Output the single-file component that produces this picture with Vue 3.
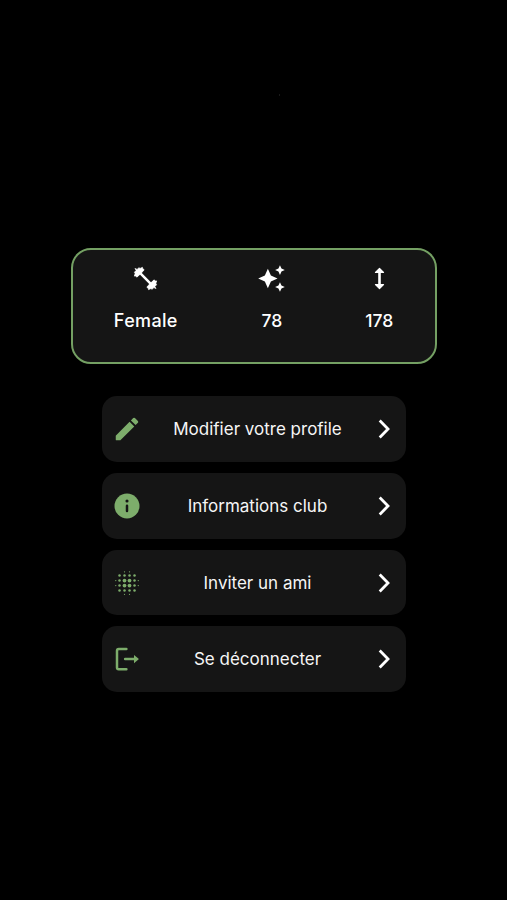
<script setup>
import { ref } from 'vue'

const stats = ref([
  { icon: 'dumbbell', value: 'Female' },
  { icon: 'sparkles', value: '78' },
  { icon: 'height', value: '178' }
])

const menu = ref([
  { icon: 'edit', label: 'Modifier votre profile' },
  { icon: 'info', label: 'Informations club' },
  { icon: 'blur', label: 'Inviter un ami' },
  { icon: 'logout', label: 'Se déconnecter' }
])

// [x, y, radius]
const dots = [
  [10, 3, 0.5], [14, 3, 0.5],
  [6, 6, 1], [10, 6, 1], [14, 6, 1], [18, 6, 1],
  [3, 10, 0.5], [6, 10, 1], [10, 10, 1.5], [14, 10, 1.5], [18, 10, 1], [21, 10, 0.5],
  [3, 14, 0.5], [6, 14, 1], [10, 14, 1.5], [14, 14, 1.5], [18, 14, 1], [21, 14, 0.5],
  [6, 18, 1], [10, 18, 1], [14, 18, 1], [18, 18, 1],
  [10, 21, 0.5], [14, 21, 0.5]
]
</script>

<template>
  <main class="profile">
    <i class="speck"></i>

    <section class="stats">
      <div v-for="stat in stats" :key="stat.icon" class="stat" :class="stat.icon">
        <svg v-if="stat.icon === 'dumbbell'" class="stat-icon" viewBox="0 0 30 30">
          <g fill="currentColor" stroke="currentColor" stroke-linejoin="round" stroke-linecap="round">
            <path d="M9 9 21 21" stroke-width="2.600" />
            <path d="M4.500 4.800 6.300 5.600 8.300 3.800 9.300 4.700 11.800 3.500 12.300 5.200 13.600 6 11 9 9 11 6 13.600 5.200 12.300 3.500 12.500 4.300 10 3.600 8.500 5.200 6.800Z" stroke-width="0.800" />
            <path d="M25.500 25.200 23.700 24.400 21.700 26.200 20.700 25.300 18.200 26.500 17.700 24.800 16.400 24 19 21 21 19 24 16.400 24.800 17.700 26.500 17.500 25.700 20 26.400 21.500 24.800 23.200Z" stroke-width="0.800" />
          </g>
        </svg>
        <svg v-else-if="stat.icon === 'sparkles'" class="stat-icon" viewBox="0 0 24 24">
          <path fill="currentColor" d="m19 9 1.25-2.75L23 5l-2.75-1.25L19 1l-1.25 2.75L15 5l2.75 1.25L19 9zm-7.5.5L9 4 6.500 9.500 1 12l5.500 2.500L9 20l2.500-5.500L17 12l-5.500-2.500zM19 15l-1.250 2.750L15 19l2.750 1.250L19 23l1.250-2.750L23 19l-2.750-1.250L19 15z" />
        </svg>
        <svg v-else class="stat-icon" viewBox="0 0 30 30">
          <path d="M15 4.500 19.200 8.700H10.800ZM15 25.500 19.200 21.300H10.800Z" fill="currentColor" stroke="currentColor" stroke-width="1.200" stroke-linejoin="round" />
          <path d="M15 8v14" stroke="currentColor" stroke-width="2.700" />
        </svg>
        <span class="stat-value">{{ stat.value }}</span>
      </div>
    </section>

    <nav class="menu">
      <button v-for="item in menu" :key="item.icon" type="button" class="menu-item">
        <svg class="menu-icon" viewBox="0 0 24 24">
          <path v-if="item.icon === 'edit'" fill="currentColor" d="M3 17.460v3.040c0 .280.220.500.500.500h3.040c.130 0 .260-.050.350-.150L17.810 9.940l-3.750-3.750L3.150 17.100c-.100.100-.150.220-.150.360zM20.710 7.040a1 1 0 0 0 0-1.410l-2.340-2.340a1 1 0 0 0-1.410 0l-1.830 1.830 3.750 3.750 1.830-1.830z" />
          <g v-else-if="item.icon === 'info'">
            <circle cx="12" cy="12" r="10" fill="currentColor" />
            <circle cx="12" cy="8" r="1.250" fill="#151515" />
            <path d="M12 11.700v4.300" stroke="#151515" stroke-width="2" stroke-linecap="round" />
          </g>
          <g v-else-if="item.icon === 'blur'" fill="currentColor">
            <circle v-for="dot in dots" :key="dot.join()" :cx="dot[0]" :cy="dot[1]" :r="dot[2]" />
          </g>
          <g v-else>
            <path d="M11.500 3.900H5.400Q4 3.900 4 5.300V18.700Q4 20.100 5.400 20.100H11.500" fill="none" stroke="currentColor" stroke-width="2" stroke-linecap="round" />
            <path d="M10.500 12H18" stroke="currentColor" stroke-width="2" stroke-linecap="round" />
            <path d="M17.600 8.700 21.100 11.600Q21.500 12 21.100 12.400L17.600 15.300Z" fill="currentColor" />
          </g>
        </svg>
        <span class="label">{{ item.label }}</span>
        <svg class="chevron" viewBox="0 0 12 20">
          <path d="M1.700 1.600 10 10 1.700 18.400" fill="none" stroke="currentColor" stroke-width="2.800" />
        </svg>
      </button>
    </nav>
  </main>
</template>

<style>
body {
  background: #000;
}
</style>

<style scoped>
.profile {
  box-sizing: border-box;
  position: relative;
  height: 900px;
  padding-top: 247.5px;
  background: #000;
  color: #fff;
  font-family: Inter, "Liberation Sans", sans-serif;
}

.speck {
  position: absolute;
  left: 279px;
  top: 94px;
  width: 1px;
  height: 2px;
  background: #1a1a1a;
}

.stats {
  box-sizing: border-box;
  display: flex;
  justify-content: space-around;
  width: 366px;
  height: 116px;
  margin: 0 0 0 71px;
  padding: 14.500px 2px 0 0;
  border: 2px solid #74a063;
  border-radius: 20px;
  background: #151515;
}

.stat {
  display: flex;
  flex-direction: column;
  align-items: center;
  width: 28px;
}

.stat.dumbbell {
  width: 66px;
}

.stat-icon {
  flex: none;
  width: 29px;
  height: 29px;
}

.stat-value {
  margin-top: 17px;
  font-size: 17.500px;
  font-weight: 500;
  line-height: 22px;
}

.dumbbell .stat-value {
  font-size: 18px;
  letter-spacing: 0.350px;
  margin-right: -0.350px;
}

.menu {
  display: flex;
  flex-direction: column;
  gap: 11.200px;
  width: 304px;
  margin: 32.900px 0 0 102px;
}

.menu-item {
  box-sizing: border-box;
  display: flex;
  align-items: center;
  width: 304px;
  height: 65.500px;
  padding: 0 16px 0 10px;
  border: 0;
  border-radius: 15px;
  background: #151515;
  color: #f5f5f5;
  font-family: inherit;
  cursor: pointer;
}

.menu-icon {
  flex: none;
  width: 30px;
  height: 30px;
  color: #7dad6b;
}

.label {
  flex: 1;
  padding-right: 5px;
  font-size: 17px;
  font-weight: 400;
  line-height: 22px;
  text-align: center;
}

.chevron {
  flex: none;
  width: 12px;
  height: 20px;
  color: #fff;
}
</style>
